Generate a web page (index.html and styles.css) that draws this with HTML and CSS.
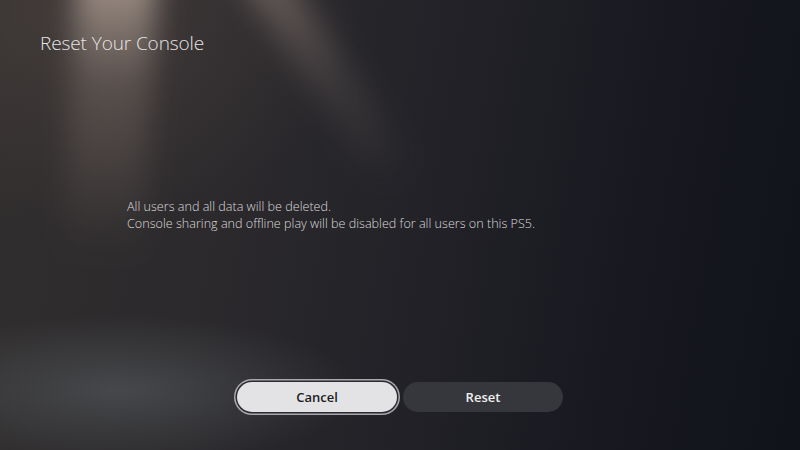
FILE: index.html
```html
<!DOCTYPE html>
<html lang="en">
<head>
  <meta charset="UTF-8">
  <meta name="viewport" content="width=device-width, initial-scale=1.0">
  <title>Reset Your Console</title>
  <link rel="stylesheet" href="styles.css">
</head>
<body>
  <div class="screen">
    <div class="beam beam-left"></div>
    <div class="beam beam-right"></div>

    <h1 class="title">Reset Your Console</h1>

    <div class="message">
      <p>All users and all data will be deleted.</p>
      <p>Console sharing and offline play will be disabled for all users on this PS5.</p>
    </div>

    <div class="actions">
      <button class="btn btn-focus">Cancel</button>
      <button class="btn">Reset</button>
    </div>
  </div>
</body>
</html>
```

FILE: styles.css
```css
:root {
  --text: #e6e4e4;
  --muted: #dcdada;
  --btn-bg: #36373c;
  --btn-focus: #e3e3e5;
}

* {
  box-sizing: border-box;
}

body {
  margin: 0;
  font-family: 'Open Sans', 'Noto Sans', sans-serif;
  background: #1a1b21;
}

.screen {
  position: relative;
  width: 800px;
  height: 450px;
  overflow: hidden;
  display: flex;
  flex-direction: column;
  padding: 30px 0 0 0;
  background:
    radial-gradient(ellipse 240px 75px at 120px 390px, rgba(100, 108, 112, 0.45), transparent 100%),
    radial-gradient(ellipse 280px 220px at 80px 10px, rgba(100, 86, 80, 0.35), transparent 100%),
    linear-gradient(100deg, #312e2e 0%, #2b292c 30%, #212127 55%, #17181f 80%, #11131a 100%);
}

/* soft light rays from the top */
.beam {
  position: absolute;
  top: -40px;
  pointer-events: none;
  filter: blur(14px);
}

.beam-left {
  left: 70px;
  width: 80px;
  height: 300px;
  background: linear-gradient(180deg, rgba(215, 195, 180, 0.7) 0%, rgba(170, 150, 140, 0.28) 40%, transparent 100%);
  transform: rotate(3deg);
}

.beam-right {
  left: 230px;
  width: 44px;
  height: 270px;
  background: linear-gradient(180deg, rgba(180, 160, 150, 0.45) 0%, rgba(150, 135, 128, 0.2) 50%, transparent 100%);
  transform: rotate(-34deg);
  transform-origin: top center;
}

.title {
  position: relative;
  margin: 0 0 0 40px;
  font-size: 19px;
  font-weight: 300;
  color: var(--text);
  letter-spacing: -0.1px;
}

.message {
  position: relative;
  margin: 142px 0 0 127px;
  font-size: 12.6px;
  font-weight: 300;
  color: var(--muted);
  line-height: 17px;
}

.message p {
  margin: 0;
}

.actions {
  position: relative;
  margin-top: auto;
  margin-bottom: 38px;
  display: flex;
  justify-content: center;
  gap: 6px;
}

.btn {
  width: 160px;
  height: 30px;
  border: none;
  border-radius: 15px;
  background: var(--btn-bg);
  color: #f0f0f0;
  font-family: 'Open Sans', sans-serif;
  font-size: 13px;
  font-weight: 600;
}

.btn-focus {
  background: var(--btn-focus);
  color: #1c1c1f;
  box-shadow: 0 0 0 1.5px #2b2b30, 0 0 0 3px #a9a8ae;
}
```
